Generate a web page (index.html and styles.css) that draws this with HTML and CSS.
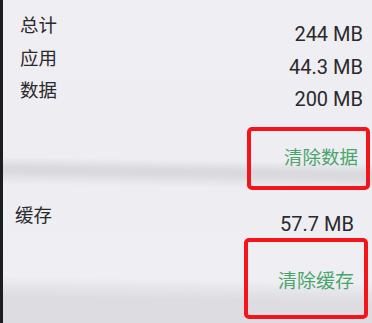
FILE: index.html
```html
<!DOCTYPE html>
<html lang="zh-CN">
<head>
<meta charset="utf-8">
<title>存储</title>
<link rel="stylesheet" href="styles.css">
</head>
<body>
<div class="screen">
  <section class="group group-storage">
    <div class="row"><span class="label">总计</span><span class="value">244 MB</span></div>
    <div class="row"><span class="label">应用</span><span class="value">44.3 MB</span></div>
    <div class="row"><span class="label">数据</span><span class="value">200 MB</span></div>
    <div class="action action-data">
      <div class="mark mark-data"><span class="btn">清除数据</span></div>
    </div>
  </section>
  <section class="group group-cache">
    <div class="row"><span class="label">缓存</span><span class="value">57.7 MB</span></div>
    <div class="action action-cache">
      <div class="mark mark-cache"><span class="btn btn-cache">清除缓存</span></div>
    </div>
  </section>
</div>
</body>
</html>
```
FILE: styles.css
```css
html, body {
  margin: 0;
  padding: 0;
}
body {
  width: 372px;
  height: 323px;
  overflow: hidden;
  background: #ecebf0;
  font-family: "Noto Sans CJK SC", Roboto, sans-serif;
}
.screen {
  box-sizing: border-box;
  height: 323px;
  border-left: 3px solid #1d1c20;
  background: linear-gradient(181deg,
    #efeef2 0px,
    #eeedf1 163px,
    #e2e1e6 169px,
    #d9d8dd 174px,
    #dbdadf 179px,
    #e6e5ea 185px,
    #eeedf1 191px,
    #efeef2 282px,
    #e5e4e9 293px,
    #dddce1 303px,
    #dddce1 100%);
}
.group {
  display: flex;
  flex-direction: column;
}
.group-storage {
  padding: 8px 0 0 17px;
}
.group-cache {
  padding: 8px 0 0 12px;
}
.row {
  display: flex;
  justify-content: space-between;
  align-items: flex-start;
  height: 32.5px;
}
.label {
  font-family: "Noto Sans CJK SC", sans-serif;
  font-size: 18.5px;
  line-height: 33px;
  color: #2a2a2c;
}
.value {
  font-family: Roboto, "Noto Sans", sans-serif;
  font-size: 20px;
  line-height: 33px;
  margin-top: 10px;
  color: #2a2a2c;
}
.group-storage .value {
  margin-right: 9px;
}
.group-cache .row {
  height: 33px;
}
.group-cache .value {
  margin-right: 18px;
}
.action {
  display: flex;
  justify-content: flex-end;
}
.action-data {
  margin-top: 21.5px;
  padding-right: 2px;
}
.action-cache {
  margin-top: 7px;
  padding-right: 4px;
}
.mark {
  box-sizing: border-box;
  display: flex;
  align-items: center;
  justify-content: flex-end;
  border: 4px solid #f5141a;
  border-radius: 5px;
}
.mark-data {
  width: 123px;
  height: 63px;
  padding: 0 8px 5px 0;
}
.mark-cache {
  width: 124px;
  height: 81px;
  padding: 3px 10px 0 0;
}
.btn {
  font-family: "Noto Sans CJK SC", sans-serif;
  font-size: 18.5px;
  line-height: 20px;
  color: #4aa56d;
}
.btn-cache {
  font-size: 19px;
}
```
